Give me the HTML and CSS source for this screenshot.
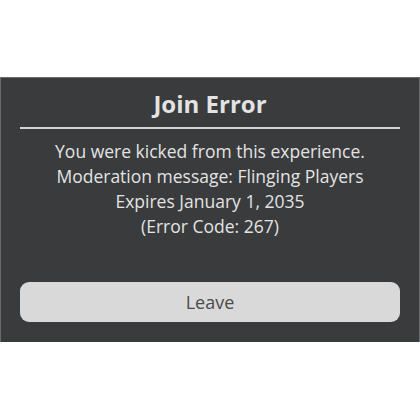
FILE: index.html
```html
<!DOCTYPE html>
<html>
<head>
<meta charset="utf-8">
<link rel="stylesheet" href="styles.css">
</head>
<body>
<div class="page">
  <div class="dialog">
    <h1 class="title">Join Error</h1>
    <div class="divider"></div>
    <div class="message">
      <p>You were kicked from this experience.</p>
      <p>Moderation message: Flinging Players</p>
      <p>Expires January 1, 2035</p>
      <p>(Error Code: 267)</p>
    </div>
    <button class="leave">Leave</button>
  </div>
</div>
</body>
</html>
```
FILE: styles.css
```css
html, body {
  margin: 0;
  padding: 0;
  background: #ffffff;
}
.page {
  width: 420px;
  height: 420px;
  display: flex;
  flex-direction: column;
  justify-content: flex-start;
  padding-top: 77px;
  box-sizing: border-box;
}
.dialog {
  height: 265px;
  box-sizing: border-box;
  background: #393b3d;
  border-top: 1px solid #6a6b6d;
  border-left: 1px solid #6a6b6d;
  border-right: 1px solid #6a6b6d;
  display: flex;
  flex-direction: column;
  align-items: center;
  padding: 0 19px;
  font-family: "Open Sans", "Noto Sans", sans-serif;
  color: #e6e6e6;
}
.title {
  margin: 8px 0 0 0;
  font-size: 24px;
  font-weight: 700;
  line-height: 36px;
  color: #e3e3e3;
}
.divider {
  align-self: stretch;
  height: 2px;
  margin-top: 5px;
  background: #d4d4d4;
}
.message {
  margin-top: 10px;
  text-align: center;
  font-size: 17.5px;
  line-height: 25px;
  color: #e3e3e3;
}
.message p {
  margin: 0;
}
.leave {
  align-self: stretch;
  margin-top: 43px;
  height: 40px;
  border: none;
  border-radius: 9px;
  background: #d9d9d9;
  color: #4b4b4b;
  font-family: "Open Sans", "Noto Sans", sans-serif;
  font-size: 18px;
  padding: 0;
}
```
